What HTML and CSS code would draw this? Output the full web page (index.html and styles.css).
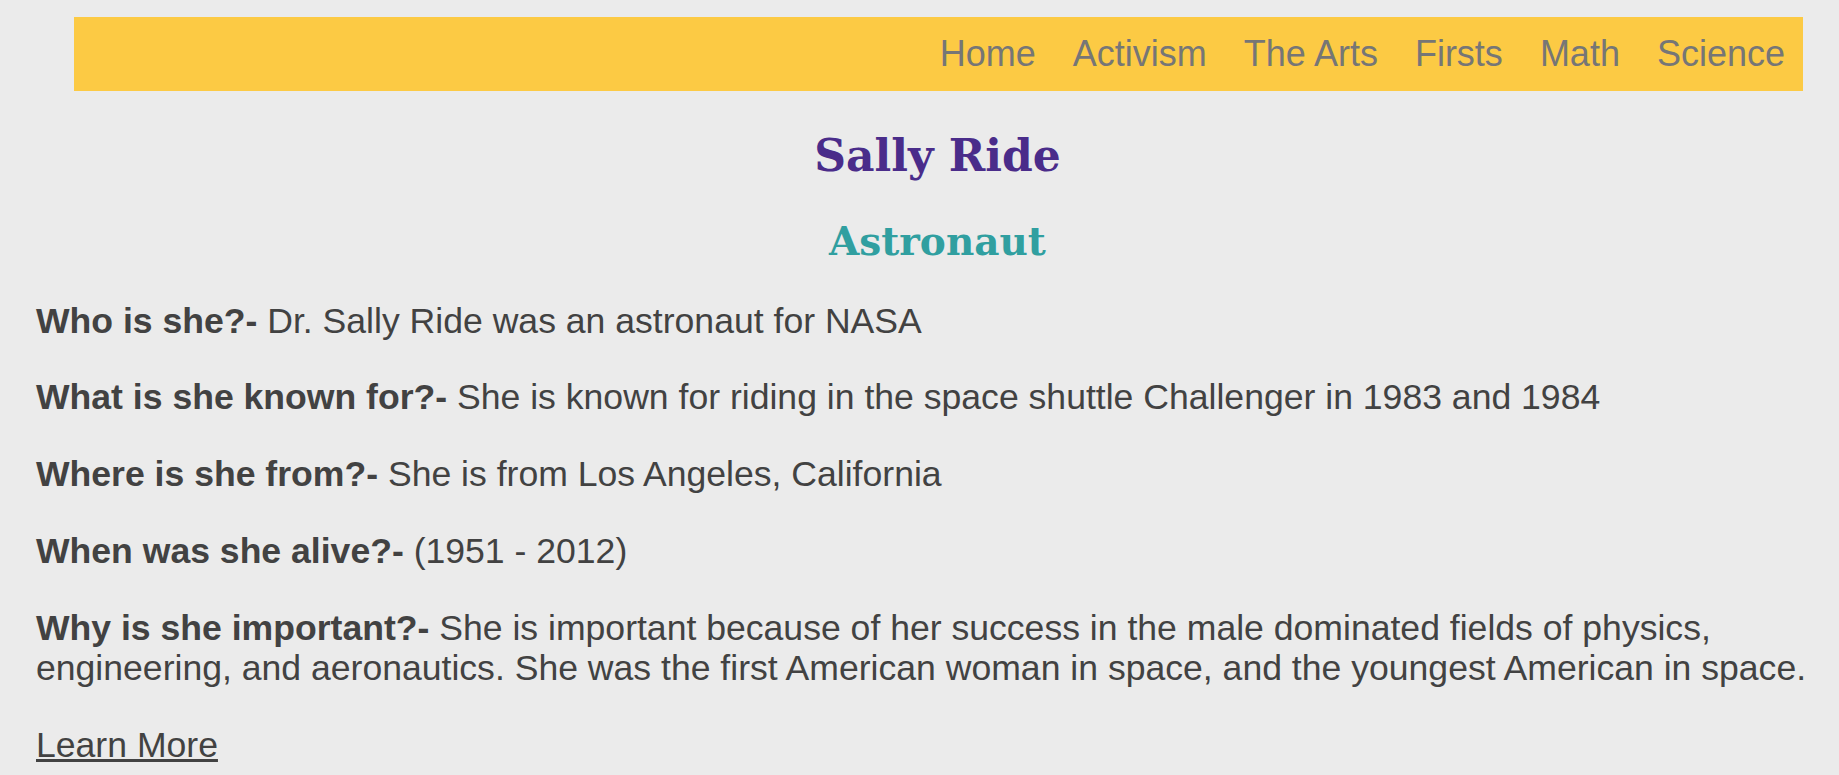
FILE: index.html
```html
<!DOCTYPE html>
<html lang="en">
<head>
<meta charset="utf-8">
<title>Sally Ride</title>
<link rel="stylesheet" href="styles.css">
</head>
<body>
<div class="page">
  <nav class="nav">
    <a href="#">Home</a>
    <a href="#">Activism</a>
    <a href="#">The Arts</a>
    <a href="#">Firsts</a>
    <a href="#">Math</a>
    <a href="#">Science</a>
  </nav>
  <h1 class="name">Sally Ride</h1>
  <h2 class="role">Astronaut</h2>
  <p class="fact"><b>Who is she?-</b> Dr. Sally Ride was an astronaut for NASA</p>
  <p class="fact"><b>What is she known for?-</b> She is known for riding in the space shuttle Challenger in 1983 and 1984</p>
  <p class="fact"><b>Where is she from?-</b> She is from Los Angeles, California</p>
  <p class="fact"><b>When was she alive?-</b> (1951 - 2012)</p>
  <p class="fact"><b>Why is she important?-</b> She is important because of her success in the male dominated fields of physics, engineering, and aeronautics. She was the first American woman in space, and the youngest American in space.</p>
  <p class="fact"><a class="more" href="#">Learn More</a></p>
</div>
</body>
</html>
```
FILE: styles.css
```css
html, body {
  margin: 0;
  padding: 0;
  background: #ebebeb;
}
body {
  font-family: "Liberation Sans", Arial, sans-serif;
  color: #424242;
}
.page {
  padding: 17px 0 0 36px;
}
.nav {
  display: flex;
  justify-content: flex-end;
  align-items: center;
  gap: 37px;
  height: 74px;
  margin: 0 36px 0 38px;
  padding-right: 18px;
  background: #fcca44;
}
.nav a {
  font-size: 36px;
  color: #767676;
  text-decoration: none;
}
.name, .role {
  font-family: "DejaVu Serif", Georgia, serif;
  font-weight: bold;
  text-align: center;
  line-height: 1.2;
}
.name {
  font-size: 44px;
  color: #4a2c8a;
  margin: 39px 0 0;
}
.role {
  font-size: 39px;
  color: #309fa0;
  margin: 35px 0 0;
}
.fact {
  font-size: 35.6px;
  line-height: 40.5px;
  margin: 0 0 36.3px;
}
.role + .fact {
  margin-top: 36px;
}
.fact b {
  font-weight: bold;
}
.more {
  color: #424242;
  text-decoration: underline;
}
```
